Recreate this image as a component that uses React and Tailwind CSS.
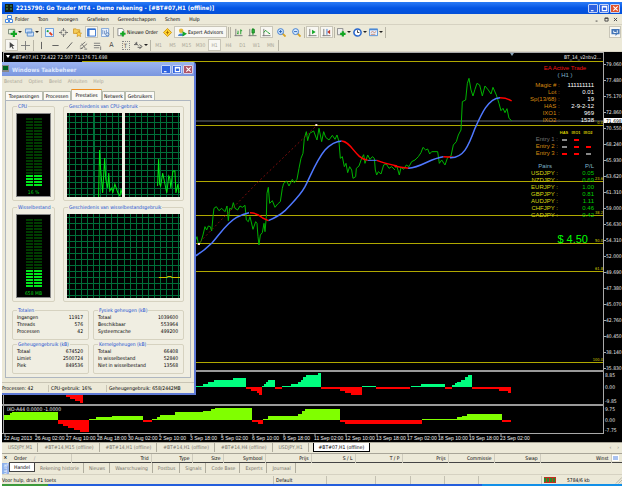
import React from "react";

const sepCls = "w-px h-[11px] bg-[#b8b5a6] shrink-0";
const Sep = () => <span className={sepCls} />;

function Tool({ label, width = "w-[13px]", pressed, menu, children }) {
  return (
    <button
      aria-label={label}
      className={
        "h-[12px] shrink-0 flex items-center justify-center gap-px " + width +
        (pressed ? " bg-[#f8f7f2] border border-[#c9c6b8]" : "")
      }
    >
      {children}
      {menu && (
        <svg viewBox="0 0 4 2" className="w-[4px] h-[2px] shrink-0"><path d="M0 0h4L2 2z" fill="#222" /></svg>
      )}
    </button>
  );
}

const Icon = ({ children }) => (
  <svg viewBox="0 0 10 10" className="w-[9px] h-[9px] shrink-0" fill="none">{children}</svg>
);

const axes = <path d="M2 1v8M0.500 8.500h9" stroke="#777" />;

function TitleButton({ label, close, children }) {
  return (
    <button
      aria-label={label}
      className={"w-[10px] h-[9px] rounded-[1px] border border-[#c4d4f8] flex items-center justify-center " + (close ? "bg-[#e0532c]" : "bg-[#2f62e0]")}
    >
      <svg viewBox="0 0 8 8" className="w-[7px] h-[7px]" fill="none" stroke="#fff" strokeWidth="1.300">{children}</svg>
    </button>
  );
}

const glyphs = {
  min: <path d="M1 6.500h3" />,
  max: <path d="M1.500 1.500h5v5h-5zM1.500 2.300h5" />,
  close: <path d="M1.500 1.500l5 5M6.500 1.500l-5 5" />,
};

function TitleBar() {
  return (
    <header className="h-[12px] flex items-center pl-[3px] pr-[2px] gap-[3px] bg-linear-to-b from-[#2a7bf6] via-[#0455e4] to-[#0450d8] text-white">
      <svg viewBox="0 0 8 8" className="w-[8px] h-[8px]"><path fill="#152015" d="M0 0h8v8H0z" /><path d="M1 2h2M5 2h2M1 5h2M5 5h2" stroke="#4a9a58" /></svg>
      <h1 className="text-[6px] font-bold leading-[8px] grow">2215790: Go Trader MT4 - Demo rekening - [#BT#07,H1 (offline)]</h1>
      <div className="flex gap-px">
        <TitleButton label="Minimaliseren">{glyphs.min}</TitleButton>
        <TitleButton label="Maximaliseren">{glyphs.max}</TitleButton>
        <TitleButton label="Sluiten" close>{glyphs.close}</TitleButton>
      </div>
    </header>
  );
}

function MenuBar() {
  return (
    <nav className="h-[11px] flex items-center pl-[3px] pr-[4px] border-b border-[#d6d2c2]">
      <svg viewBox="0 0 8 8" className="w-[8px] h-[8px] mr-[2px]" fill="#fff" stroke="#4a8ae0"><path d="M2.500 0.500h4v3h-4zM0.500 4.500h3v3h-3zM4.500 4.500h3v3h-3z" /></svg>
      <div className="flex grow gap-[9px]">
        {["Folder", "Toon", "Invoegen", "Grafieken", "Gereedschappen", "Schem", "Hulp"].map((m) => (
          <button key={m}>{m}</button>
        ))}
      </div>
      <div className="flex gap-[4px] text-[#333]">
        {["min", "max", "close"].map((g) => (
          <button key={g} aria-label={g}>
            <svg viewBox="0 0 8 8" className="w-[5px] h-[5px]" fill="none" stroke="#444" strokeWidth="1.500">{glyphs[g]}</svg>
          </button>
        ))}
      </div>
    </nav>
  );
}

function ToolbarMain() {
  return (
    <div className="h-[14px] flex items-center gap-px pl-[4px] pr-px">
      <Tool label="Nieuwe grafiek" width="w-[17px]" menu>
        <Icon><path d="M0.500 1.500h7v5h-7z" fill="#e8f4e4" stroke="#708070" /><path d="M6.500 3v7M3 6.500h7" stroke="#12a622" strokeWidth="2.400" /></Icon>
      </Tool>
      <Tool label="Profielen" width="w-[16px]" menu>
        <Icon><path d="M0.500 1h7v4.500h-7zM2.500 4.500h7V9h-7z" fill="#cfe2fa" stroke="#5a8cc8" /></Icon>
      </Tool>
      <Sep />
      <Tool label="Marktoverzicht"><Icon><path d="M0.500 0.500h9v9h-9z" fill="#e8f2ff" stroke="#5b93d8" /><path d="M2 3l2 1" stroke="#18a030" strokeWidth="2" /><path d="M5 5l3 3" stroke="#e04020" strokeWidth="2" /></Icon></Tool>
      <Tool label="Gegevensvenster"><Icon><path d="M5 0v3.500M5 6.500V10M0 5h3.500M6.500 5H10" stroke="#666" /><circle cx="5" cy="5" r="3" stroke="#888" /></Icon></Tool>
      <Tool label="Navigator"><Icon><path d="M0.500 1h3l1 1h3v4h-7z" fill="#f5cc58" stroke="#d09a30" /><path d="M6.500 3.500l1 2 2 .3-1.500 1.500.5 2.200-2-1-2 1 .5-2.200L3.500 5.800l2-.3z" fill="#ffd24a" stroke="#c78a20" strokeWidth=".7" /></Icon></Tool>
      <Tool label="Terminal" pressed><Icon><path d="M0.500 1h9v8h-9z" fill="#fff" stroke="#2f6fd0" /><path d="M1 1.500h8M2 2v7" stroke="#2f6fd0" strokeWidth="1.500" /></Icon></Tool>
      <Tool label="Strategietester"><Icon><path d="M0.500 0.500h8v9h-8z" fill="#eef5ff" stroke="#7aa2d8" /><path d="M2 2v5M4 3v4M6 2v3" stroke="#6a8fc4" /><circle cx="7" cy="7" r="1.800" fill="#cfe2fa" stroke="#5078b0" /></Icon></Tool>
      <Sep />
      <Tool label="Nieuwe Order" width="w-[45px]"><Icon><path d="M1 0.500h5l1.500 2v6H1z" fill="#fff" stroke="#888" /><path d="M6.500 3.500v6M3.500 6.500h6" stroke="#12a622" strokeWidth="2.200" /></Icon><span className="whitespace-nowrap">Nieuwe Order</span></Tool>
      <Tool label="MetaEditor" width="w-[12px]"><Icon><path d="M5 0.500L9.500 5 5 9.500.5 5z" fill="#ffd42e" stroke="#cf9310" /><path d="M5 3v4M3.500 5h3" stroke="#a86c00" /></Icon></Tool>
      <Tool label="Expert Advisors" width="w-[53px]" pressed><Icon><circle cx="3.500" cy="3" r="2.500" fill="#e5b93a" /><path d="M0 9c0-4 7-4 7 0z" fill="#4c84cc" /><path d="M5 3.500l5 3-5 3z" fill="#14a828" /></Icon><span className="whitespace-nowrap">Expert Advisors</span></Tool>
      <Sep /><Sep />
      <Tool label="Staafdiagram"><Icon>{axes}<path d="M4.500 3v4M7.500 1.500V7M3.500 6h1M7.500 3H9" stroke="#159a25" /></Icon></Tool>
      <Tool label="Kaarsen"><Icon>{axes}<path d="M5.500 0v8" stroke="#159a25" /><path d="M4.500 1.500h2.500v4H4.500z" fill="#2cc03c" stroke="#117a1c" /></Icon></Tool>
      <Tool label="Lijngrafiek" pressed><Icon>{axes}<path d="M2 5l2-2.500L6.500 5 9 6.500" stroke="#159a25" /></Icon></Tool>
      <Tool label="Inzoomen" width="w-[14px]"><Icon><path d="M6 6l3.500 3.500" stroke="#d9a320" strokeWidth="2" /><circle cx="4" cy="4" r="3.300" fill="#d9ebff" stroke="#3577cf" /><path d="M2.200 4h3.600M4 2.200v3.600" stroke="#1f5db5" /></Icon></Tool>
      <Tool label="Uitzoomen" width="w-[14px]"><Icon><path d="M6 6l3.500 3.500" stroke="#d9a320" strokeWidth="2" /><circle cx="4" cy="4" r="3.300" fill="#d9ebff" stroke="#3577cf" /><path d="M2.200 4h3.600" stroke="#1f5db5" /></Icon></Tool>
      <Sep />
      <Tool label="Autoscroll" pressed><Icon>{axes}<path d="M4.500 2l4 2.500-4 2.500z" fill="#14a828" /></Icon></Tool>
      <Tool label="Verschuiving" pressed><Icon>{axes}<path d="M5.500 1v6.500" stroke="#3577cf" /><path d="M9 2L5.800 4.500 9 7z" fill="#c0392b" /></Icon></Tool>
      <Sep />
      <Tool label="Indicatoren" width="w-[15px]" menu><Icon><path d="M0.500 0.500h6v7h-6z" fill="#eee" stroke="#888" /><path d="M6.500 3.500v6M3.500 6.500h6" stroke="#12a622" strokeWidth="2.400" /></Icon></Tool>
      <Tool label="Periodes" width="w-[15px]" menu><Icon><circle cx="5" cy="5" r="4" fill="#fff" stroke="#2766cc" strokeWidth="1.700" /><path d="M5 2.500V5h2" stroke="#333" /></Icon></Tool>
      <Tool label="Sjablonen" width="w-[16px]" menu><Icon><path d="M0.500 1h9v7.500h-9z" fill="#e9f3ff" stroke="#4e8ad4" /><path d="M1 1.800h8" stroke="#4e8ad4" strokeWidth="1.500" /><path d="M2 5l2-1 2 1 2-1M2 7h5" stroke="#c06a4a" strokeWidth=".8" /></Icon></Tool>
      <Sep />
      <span className="grow" />
      <Tool label="Berichten" width="w-[12px]" pressed><Icon><path d="M0.500 1h9v6H7L5 9V7H.5z" fill="#4476b8" /><path d="M3 3v2h3M7 2.500v3" stroke="#fff" /></Icon></Tool>
    </div>
  );
}

function ToolbarDraw() {
  const S = "#555";
  return (
    <div className="h-[12px] flex items-center gap-px pl-[3px]">
      <Tool label="Cursor" pressed><Icon><path d="M3 1v7l2-2 1.500 3 1-.6L6 5.500h2.500z" fill="#444" /></Icon></Tool>
      <Tool label="Kruisdraad"><Icon><path d="M5 0v10M0 5h10" stroke="#777" /></Icon></Tool>
      <Sep />
      <Tool label="Verticale lijn"><Icon><path d="M5 1v8" stroke={S} /></Icon></Tool>
      <Tool label="Horizontale lijn"><Icon><path d="M1.500 5h7" stroke={S} /></Icon></Tool>
      <Tool label="Trendlijn"><Icon><path d="M2 8.500l6-7" stroke={S} /></Icon></Tool>
      <Tool label="Kanaal"><Icon><path d="M1 6l6-5M2 9l7-6M3 3l4 5M1 8h3M6 9h3" stroke="#666" strokeWidth=".9" /></Icon></Tool>
      <Tool label="Fibonacci"><Icon><path d="M1 2.500h7M1 5h7M1 7.500h6M8.500 6v4" stroke="#777" /></Icon></Tool>
      <Tool label="Tekst"><span className="text-[7px] leading-[8px] text-[#444]">A</span></Tool>
      <Tool label="Tekstlabel"><span className="text-[6px] leading-[7px] w-[8px] border border-dotted border-[#888] text-[#444]">T</span></Tool>
      <Tool label="Pijlen" width="w-[16px]" menu><Icon><path d="M1 2l4 3M3 1v3H0M6 4l3 2-3 3M4 7h4" stroke={S} /></Icon></Tool>
      <Sep />
      {["M1", "M5", "M15", "M30", "H1", "H4", "D1", "W1", "MN"].map((p) => (
        <Tool key={p} label={p} pressed={p === "H1"}><span className="text-[#aaa697]">{p}</span></Tool>
      ))}
      <Sep />
    </div>
  );
}

const prices = ["79.060", "77.480", "75.170", "72.860", "70.550", "68.240", "65.930", "63.620", "61.310", "59.000", "56.630", "54.310", "52.000", "49.690", "47.380", "45.070", "42.760", "40.450", "38.140", "35.830"];
const fibs = [[61, ""], [125, "0.0"], [181, "23.6"], [215, "38.2"], [243, "50.0"], [271, "61.8"], [362, "100.0"]];
const dates = ["22 Aug 2013", "26 Aug 02:00", "27 Aug 10:00", "28 Aug 18:00", "30 Aug 02:00", "2 Sep 10:00", "3 Sep 18:00", "5 Sep 02:00", "6 Sep 10:00", "9 Sep 18:00", "11 Sep 02:00", "12 Sep 10:00", "13 Sep 18:00", "17 Sep 02:00", "18 Sep 10:00", "19 Sep 18:00", "23 Sep 02:00"];
const levels = [[377, "8.85"], [389, "0.00"], [403, "-9.85"], [411, "9.75"], [422, "0.00"], [432, "-7.75"]];

// Each step is [x, y]; a histogram run holds y until the next x.
const histo = (base, steps, end) =>
  "M" + steps[0][0] + " " + base + steps.map(([x, y]) => "H" + x + "V" + y).join("") + "H" + end + "V" + base + "Z";

const osc1 = {
  up: [
    histo(387, [[195, 386], [203, 384], [208, 382], [214, 380], [233, 378]], 246),
    histo(387, [[262, 386], [264, 384], [266, 382], [268, 380]], 275),
    histo(387, [[282, 386], [291, 384], [298, 382], [301, 380], [303, 377], [306, 375], [318, 373]], 321),
    histo(387, [[362, 386]], 376),
    histo(387, [[411, 386], [421, 384]], 445),
    histo(387, [[452, 385], [455, 383], [457, 382], [461, 380], [465, 377], [468, 375]], 472),
  ],
  down: [
    histo(387, [[60, 393], [66, 397], [70, 399], [75, 401], [80, 403]], 83),
    histo(387, [[246, 389], [251, 391], [257, 393], [259, 395]], 262),
    histo(387, [[275, 389]], 282),
    histo(387, [[321, 389], [340, 391], [345, 393], [351, 395]], 362),
    histo(387, [[376, 389]], 410),
    histo(387, [[445, 389]], 452),
    histo(387, [[472, 389], [499, 391], [508, 393]], 511),
  ],
};
const osc2 = {
  up: [
    histo(420, [[4, 415], [10, 413], [12, 412]], 58),
    histo(420, [[89, 419], [96, 417], [112, 416]], 143),
    histo(420, [[152, 419], [157, 417], [160, 415], [175, 412], [203, 411], [211, 409], [215, 408]], 252),
    histo(420, [[263, 419], [268, 416], [298, 414], [302, 411], [305, 409]], 340),
    histo(420, [[422, 419], [457, 417], [462, 416], [467, 414]], 502),
  ],
  down: [
    histo(420, [[58, 424], [63, 426], [68, 428], [74, 430], [80, 432]], 89),
    histo(420, [[143, 422]], 152),
    histo(420, [[252, 422], [258, 424]], 263),
    histo(420, [[340, 422], [345, 424]], 422),
    histo(420, [[502, 422]], 511),
  ],
};

function ChartDrawing() {
  return (
    <svg viewBox="2 51 620 391" className="block w-full h-auto bg-black font-['DejaVu_Sans_Condensed','DejaVu_Sans',sans-serif]" fill="none" role="img" aria-label="Koersgrafiek">
      <g shapeRendering="crispEdges">
        <path d="M2 51h620v1H2z" fill="#d8d4c4" />
        <path d="M3.500 434V52.500H603.500V434M2 433.500H604" stroke="#a9a9a9" />
        <path d="M4 121h599" stroke="#33373c" strokeWidth="2" />
        {fibs.map(([y]) => <path key={y} d={"M82 " + (y + 0.5) + "H603"} stroke="#b0a800" />)}
        <path d="M2 371h602M2 405h602" stroke="#999" strokeWidth="2" />
        {osc1.up.map((d) => <path key={d} d={d} fill="#00ff80" />)}
        {osc1.down.map((d) => <path key={d} d={d} fill="#ff0000" />)}
        {osc2.up.map((d) => <path key={d} d={d} fill="#80ff00" />)}
        {osc2.down.map((d) => <path key={d} d={d} fill="#ff0000" />)}
      </g>
      <path d="M510 53h4l-2 3z" fill="#8aa4b8" />

      {/* price line and moving average, left half */}
      <g transform="translate(195 50) scale(.33333)" strokeWidth="3" strokeLinejoin="round">
        <path stroke="#00b400" d="M0 575L6 560 10 582 18 575 24 555 30 530 35 540 40 528 46 530 50 543 54 500 57 475 64 470 72 482 80 475 90 485 96 468 100 512 104 475 110 478 115 458 120 475 128 480 135 468 142 472 150 466 154 510 160 515 165 500 174 538 182 515 186 520 189 560 192 585 196 555 202 548 207 520 210 545 214 500 216 430 220 412 224 460 232 452 240 472 248 462 256 455 262 415 266 400 275 393 282 408 292 388 298 398 306 388 312 355 318 325 324 310 328 265 334 245 338 272 344 250 356 243 366 270 372 235 380 275 386 245 392 262 402 270 412 256 420 268 426 255 432 275 436 325 442 320 448 350 453 340 458 368 464 350 470 360 474 385 482 380 484 355 492 348 500 325 506 314 510 340 518 315 525 328 532 320 538 325 541 360 545 375 550 365 558 372 566 345 574 342 582 355 590 350 600 360" />
        <path stroke="#901010" strokeWidth="2.500" strokeDasharray="6 7" d="M6 585L180 405L363 228" />
        <path stroke="#4f78ff" strokeWidth="4.500" d="M-2 620Q25 605 50 580C75 552 95 518 125 502Q145 491 162 488M220 512Q250 500 270 482C295 455 315 438 330 410C350 370 365 330 390 300Q415 274 440 273" />
        <path stroke="#ff0000" strokeWidth="4.500" d="M165 488Q185 488 203 504L220 512M440 273C470 275 480 325 518 331M545 331Q570 340 606 348" />
        <path stroke="#4f78ff" strokeWidth="3" d="M518 331H545" />
        <path fill="#ffe0e0" d="M361 222h6v6h-6zM9 579h6v6H9z" />
      </g>

      {/* right half */}
      <g transform="translate(395 50) scale(.33333)" strokeWidth="3" strokeLinejoin="round">
        <path stroke="#00b400" d="M0 352L6 350 13 375 18 352 26 358 34 345 42 350 50 335 60 330 70 320 78 308 84 292 92 300 98 297 104 312 110 305 128 305 133 340 140 330 150 345 158 322 168 318 175 285 184 275 190 255 198 240 202 155 212 150 217 100 222 85 228 120 234 138 240 118 246 100 254 105 262 138 270 108 280 120 288 132 294 112 304 135 312 160 318 182 324 175 330 188 336 176 342 205 350 212" />
        <path stroke="#ff0000" strokeWidth="4.500" d="M-2 348Q15 352 42 355M145 320L175 322M315 143Q335 143 350 153" />
        <path stroke="#4f78ff" strokeWidth="4.500" d="M40 355C80 352 105 325 145 320M165 323C205 325 220 290 240 235C260 190 280 145 315 143" />
      </g>

      <g fontSize="5" fill="#e8e8e8">
        <text x="12" y="59">#BT#07,H1  72.422 72.507 71.176 71.698</text>
        <path d="M6 55h4l-2 3z" fill="#fff" />
        <text x="601" y="59" textAnchor="end">BT_14_v2nbv2...</text>
        {prices.map((p, i) => <text key={p} x="606" y={66 + i * 16}>{p}</text>)}
        {prices.map((p, i) => <path key={p} d={"M604 " + (64.5 + i * 16) + "h2"} stroke="#aaa" />)}
        <path d="M604 118h18v5h-18z" fill="#fff" />
        <text x="606" y="123" fill="#000">71.698</text>
        {levels.map(([y, t]) => <text key={y} x="605" y={y}>{t}</text>)}
        <text x="7" y="411">IXO-A44 0.0000 -1.0000</text>
        {dates.map((d, i) => <path key={d} d={"M" + (5 + i * 31) + " 434v2"} stroke="#aaa" />)}
      </g>
      <g fontSize="5" fill="#f0f0f0" className="font-['Liberation_Sans',Arial,sans-serif]">
        {dates.map((d, i) => <text key={d} x={4 + i * 31} y="440">{d}</text>)}
      </g>
      <g fontSize="4" fill="#d8d000">
        {fibs.map(([y, t]) => <text key={y} x="603" y={y - 1} textAnchor="end">{t}</text>)}
      </g>
    </svg>
  );
}

const settings = [["Magic #", "111111111"], ["Lot", "0.01"], ["Sp(13/68)", "19"], ["HAS", "2-9-2-12"], ["IXO1", "969"], ["IXO2", "1538"]];
const entries = [
  ["Entry 1", ["bg-[#888]", "bg-[#ff0000]", "bg-transparent"]],
  ["Entry 2", ["bg-[#888]", "bg-[#ff0000]", "bg-[#ff0000]"]],
  ["Entry 3", ["bg-[#ff0000]", "bg-[#ff0000]", "bg-[#888]"]],
];
const pairs = [["USDJPY", "0.05"], ["NZDJPY", "0.69"], ["EURJPY", "1.00"], ["GBPJPY", "0.81"], ["AUDJPY", "1.11"], ["CHFJPY", "0.46"], ["CADJPY", "0.42"]];

function TradePanel() {
  return (
    <aside className="absolute right-[28px] top-[14px] w-[64px] text-[6px] leading-[7px] font-['Liberation_Sans',Arial,sans-serif]">
      <p className="text-[#f01010] text-center pl-[6px]">EA Active Trade</p>
      <p className="text-[#7fb4cc] text-center pl-[6px] mb-[3px]">( H1 )</p>
      <table className="w-full">
        <tbody>
          {settings.map(([k, v]) => (
            <tr key={k}>
              <th scope="row" className="w-[28px] p-0 text-right font-normal text-[#d88a10] whitespace-nowrap">{k} :</th>
              <td className="p-0 text-right text-white">{v}</td>
            </tr>
          ))}
        </tbody>
      </table>
      <table className="w-full mt-[5px]">
        <thead>
          <tr className="text-[4px] text-[#d8d000]">
            <th className="w-[28px] p-0" />
            {["HAS", "IXO1", "IXO2"].map((h) => <th key={h} className="w-[12px] p-0">{h}</th>)}
          </tr>
        </thead>
        <tbody>
          {entries.map(([name, dashes], i) => (
            <tr key={name}>
              <th scope="row" className={"p-0 text-right font-normal whitespace-nowrap " + (i === 0 ? "text-[#777]" : "text-[#d88a10]")}>{name} :</th>
              {dashes.map((c, j) => <td key={j} className="p-0"><span className={"block mx-auto w-[5px] h-[2px] " + c} /></td>)}
            </tr>
          ))}
        </tbody>
      </table>
      <table className="w-full mt-[6px]">
        <thead>
          <tr className="text-[#7fb4cc]">
            <th className="w-[28px] p-0 pr-[6px] text-right font-normal">Pairs</th>
            <th className="p-0 text-right font-normal">P/L</th>
          </tr>
        </thead>
        <tbody>
          {pairs.map(([k, v]) => (
            <tr key={k}>
              <th scope="row" className="p-0 text-right font-normal text-[#d8d810] whitespace-nowrap">{k} :</th>
              <td className="p-0 text-right text-[#00d000]">{v}</td>
            </tr>
          ))}
        </tbody>
      </table>
      <p className="mt-[14px] pr-[6px] text-right text-[11px] leading-[12px] text-[#00ff00]">$ 4.50</p>
    </aside>
  );
}

function Group({ title, className, children }) {
  return (
    <fieldset className={"min-w-0 rounded-[2px] border border-[#d6d2c0] px-[3px] " + className}>
      <legend className="px-px ml-px leading-[6px] text-[#1a50d0] whitespace-nowrap">{title}</legend>
      {children}
    </fieldset>
  );
}

function Meter({ label, lit, title }) {
  const rows = Array.from({ length: 23 }, (_, i) => i);
  return (
    <Group title={title} className="w-[43px] h-[98px] shrink-0">
      <div className="mt-[4px] h-[84px] bg-black border border-[#888] flex flex-col items-center justify-between pt-[3px] pb-px">
        <svg viewBox="0 0 16 70" className="w-[16px] h-[70px]" shapeRendering="crispEdges">
          {rows.map((i) => (
            <path key={i} d={"M0 " + (i * 3 + 1) + "h7v2h-7zM8 " + (i * 3 + 1) + "h8v2h-8z"} fill={i >= 23 - lit ? "#00e81a" : "#003c00"} />
          ))}
        </svg>
        <span className="text-[#00d010] leading-[6px]">{label}</span>
      </div>
    </Group>
  );
}

function Graph({ w, offset, children }) {
  const xs = [];
  for (let x = offset; x < w; x += 6) xs.push(x);
  const ys = Array.from({ length: 14 }, (_, i) => 3 + i * 6);
  return (
    <svg viewBox={"0 0 " + w + " 84"} className="h-[84px] grow min-w-0 bg-black" preserveAspectRatio="none" fill="none">
      <g stroke="#006e38" shapeRendering="crispEdges">
        {xs.map((x) => <path key={x} d={"M" + (x + 0.5) + " 0v84"} />)}
        {ys.map((y) => <path key={y} d={"M0 " + (y + 0.5) + "H" + w} />)}
      </g>
      {children}
    </svg>
  );
}

const totals = [
  ["Totalen", [["Ingangen", "11917"], ["Threads", "576"], ["Processen", "42"]]],
  ["Fysiek geheugen (kB)", [["Totaal", "1039600"], ["Beschikbaar", "553964"], ["Systeemcache", "499200"]]],
  ["Geheugengebruik (kB)", [["Totaal", "674520"], ["Limiet", "2500724"], ["Piek", "849536"]]],
  ["Kernelgeheugen (kB)", [["Totaal", "66408"], ["In wisselbestand", "52840"], ["Niet in wisselbestand", "13568"]]],
];

function TaskManager() {
  return (
    <section className="absolute left-0 top-[11px] w-[194px] bg-[#ece9d8] border-r-2 border-b-2 border-[#5f7ad6] rounded-tr-[3px] text-[5px] leading-[7px]">
      <header className="h-[14px] flex items-center gap-[2px] pr-px bg-linear-to-b from-[#9db5f0] to-[#7a96df] rounded-tr-[2px]">
        <svg viewBox="0 0 8 8" className="w-[8px] h-[8px]"><path fill="#888" d="M0 0h7v7H0z" /><path fill="#062" d="M1 1h5v4H1z" /></svg>
        <h2 className="grow text-[6px] font-bold text-[#dfe8fc]">Windows Taakbeheer</h2>
        <div className="flex gap-px">
          <TitleButton label="Minimaliseren">{glyphs.min}</TitleButton>
          <TitleButton label="Maximaliseren">{glyphs.max}</TitleButton>
          <button aria-label="Sluiten" className="w-[10px] h-[9px] rounded-[1px] border border-[#d8d0e8] bg-[#b05568] flex items-center justify-center">
            <svg viewBox="0 0 8 8" className="w-[7px] h-[7px]" stroke="#fff" strokeWidth="1.300">{glyphs.close}</svg>
          </button>
        </div>
      </header>
      <nav className="h-[10px] flex items-center gap-[6px] pl-[2px] text-[#aaa697]">
        {["Bestand", "Opties", "Beeld", "Afsluiten", "Help"].map((m) => <button key={m}>{m}</button>)}
      </nav>
      <div className="flex items-end h-[14px] pl-[3px]">
        {[["Toepassingen", "w-[38px]"], ["Processen", "w-[28px]"], ["Prestaties", "w-[31px]"], ["Netwerk", "w-[23px]"], ["Gebruikers", "w-[30px]"]].map(([t, w]) => (
          <button key={t} className={w + " rounded-t-[1px] border border-b-0 border-[#b8bcae] bg-[#fbfaf6] " + (t === "Prestaties" ? "h-[11px] border-t-[#f09020]" : "h-[9px]")}>{t}</button>
        ))}
      </div>
      <div className="mx-[3px] border border-[#aeb6c0] bg-[#f0eee2] px-[6px] pt-[2px] h-[278px]">
        <div className="flex gap-[8px]">
          <Meter title="CPU" label="16 %" lit={4} />
          <Group title="Geschiedenis van CPU-gebruik" className="grow h-[98px]">
            <div className="flex gap-[3px] mt-[4px]">
              <Graph w={54} offset={2}>
                <path stroke="#00e818" d="M31 84L32 37 33 56 35 80 37 45 38 66 40 75 41 60 42 78 44 75 45 80 47 71 50 80 52 83 53 76 54 81" />
              </Graph>
              <Graph w={54} offset={4}>
                <path stroke="#00e818" d="M32 73L33 46 34 71 35 73 37 60 39 70 41 80 43 63 44 65 45 75 47 58 49 58 50 80 52 71 53 80" />
              </Graph>
            </div>
          </Group>
        </div>
        <div className="flex gap-[8px] mt-[3px]">
          <Meter title="Wisselbestand" label="658 MB" lit={6} />
          <Group title="Geschiedenis van wisselbestandsgebruik" className="grow h-[98px]">
            <div className="flex mt-[4px]">
              <Graph w={112} offset={2}>
                <path stroke="#c8c000" d="M91 63.500h8l1-1h3l1 1h8" />
              </Graph>
            </div>
          </Group>
        </div>
        <div className="grid grid-cols-[77px_1fr] gap-x-[4px] gap-y-px mt-[5px]">
          {totals.map(([title, rows]) => (
            <Group key={title} title={title} className="h-[33px]">
              <table className="w-full mt-px">
                <tbody>
                  {rows.map(([k, v]) => (
                    <tr key={k}>
                      <th scope="row" className="p-0 pl-px text-left font-normal whitespace-nowrap">{k}</th>
                      <td className="p-0 pr-[2px] text-right">{v}</td>
                    </tr>
                  ))}
                </tbody>
              </table>
            </Group>
          ))}
        </div>
      </div>
      <footer className="mt-[4px] h-[11px] flex items-center border-t border-[#c8c4b4] whitespace-nowrap">
        <span className="w-[46px]">Processen: 42</span>
        <span className="w-[58px] border-l border-[#c8c4b4] pl-[2px]">CPU-gebruik: 16%</span>
        <span className="grow border-l border-[#c8c4b4] pl-[2px]">Geheugengebruik: 658/2442MB</span>
      </footer>
    </section>
  );
}

function ChartTabs() {
  return (
    <div className="h-[11px] flex items-start border-t border-[#a8a598] text-[#77746a]">
      {["USDJPY,M1", "#BT#14,M15 (offline)", "#BT#14,H1 (offline)", "#BT#14,H1 (offline)", "#BT#14,H4 (offline)", "USDJPY,H1"].map((t, i) => (
        <button key={i} className="h-[9px] pl-[6px] pr-[5px] border-r border-[#b0ad9e] leading-[9px]">{t}</button>
      ))}
      <button className="h-[9px] ml-[4px] px-[5px] bg-white border border-t-0 border-black text-black leading-[8px]">#BT#07,H1 (offline)</button>
      <span className="grow" />
      <span className="pr-[3px] flex gap-[6px] leading-[9px]"><button aria-label="Vorige">‹</button><button aria-label="Volgende">›</button></span>
    </div>
  );
}

const cols = [["Order", "w-[62px] text-left pl-[5px]"], ["Trid", "w-[80px] text-right"], ["Type", "w-[41px] text-right"], ["Size", "w-[31px] text-right"], ["Symbool", "w-[42px] text-right"], ["Prijs", "w-[46px] text-right"], ["S / L", "w-[44px] text-right"], ["T / P", "w-[47px] text-right"], ["Prijs", "w-[46px] text-right"], ["Commissie", "w-[46px] text-right"], ["Swap", "w-[46px] text-right"], ["Winst", "text-right"]];

function Terminal() {
  return (
    <section className="h-[21px] flex border-t border-[#a8a598]">
      <div className="w-[8px] flex flex-col items-center justify-between">
        <button aria-label="Sluiten" className="leading-[7px] font-bold">×</button>
        <span className="w-[7px] h-[11px] bg-[#8fb0ea] text-white [writing-mode:vertical-rl] leading-[7px]">Term</span>
      </div>
      <div className="grow min-w-0">
        <table className="w-full table-fixed border-b border-[#444]">
          <thead>
            <tr>
              {cols.map(([c, w], i) => (
                <th key={i} className={"p-0 pr-[2px] leading-[8px] font-normal border-r border-[#cfccbe] " + w}>{c}{i === 0 && <span className="ml-[7px] text-[#999]">/</span>}</th>
              ))}
              <th className="w-[11px] p-0"><span className="block w-[7px] h-[6px] bg-[#a9c2f0] border border-white" /></th>
            </tr>
          </thead>
        </table>
        <div className="flex text-[#77746a] leading-[9px] h-[10px]">
          <button className="w-[26px] h-[9px] bg-white border border-t-0 border-[#444] text-black leading-[8px]">Handel</button>
          {["Rekening historie", "Nieuws", "Waarschuwing", "Postbus", "Signals", "Code Base", "Experts", "Journaal"].map((t) => (
            <button key={t} className="pl-[5px] pr-[4px] border-r border-[#b0ad9e]">{t}</button>
          ))}
        </div>
      </div>
    </section>
  );
}

function StatusBar() {
  const cell = "border-l border-[#c4c1b2] h-[8px] pl-[2px] ";
  return (
    <footer className="h-[10px] flex items-center border-t border-[#d6d2c2] leading-[8px]">
      <span className="grow">Voor hulp, druk F1 toets</span>
      <span className={cell + "w-[53px]"}>Default</span>
      <span className={cell + "w-[49px]"} />
      <span className={cell + "w-[35px]"} />
      <span className={cell + "w-[34px]"} />
      <span className={cell + "w-[34px]"} />
      <span className={cell + "w-[63px]"} />
      <span className={cell + "w-[74px] flex items-center"}>
        <svg viewBox="0 0 12 6" className="w-[12px] h-[6px] mr-[11px]"><path fill="#c03020" d="M0 0h12v6H0z" /><path stroke="#2a8a2a" strokeDasharray="2 1" strokeWidth="4" d="M0 3h12" /></svg>
        5784/6 kb
      </span>
      <svg viewBox="0 0 8 8" className="w-[7px] h-[8px] shrink-0" stroke="#b0ad9e"><path d="M1 8l7-7M4 8l4-4M7 8l1-1" /></svg>
    </footer>
  );
}

export default function App() {
  return (
    <div className="bg-white pt-[2px] pl-[2px] pr-[3px]">
      <main className="bg-[#ece9d8] text-black text-[5px] leading-[8px] font-['DejaVu_Sans_Condensed','DejaVu_Sans',sans-serif]">
        <TitleBar />
        <MenuBar />
        <ToolbarMain />
        <ToolbarDraw />
        <div className="relative">
          <ChartDrawing />
          <TradePanel />
          <TaskManager />
        </div>
        <ChartTabs />
        <Terminal />
        <StatusBar />
        <div className="h-[2px] flex"><span className="w-[46px] bg-[#3c9a3c]" /><span className="grow bg-[#245edc]" /><span className="w-[140px] bg-[#1290e8]" /></div>
      </main>
    </div>
  );
}
